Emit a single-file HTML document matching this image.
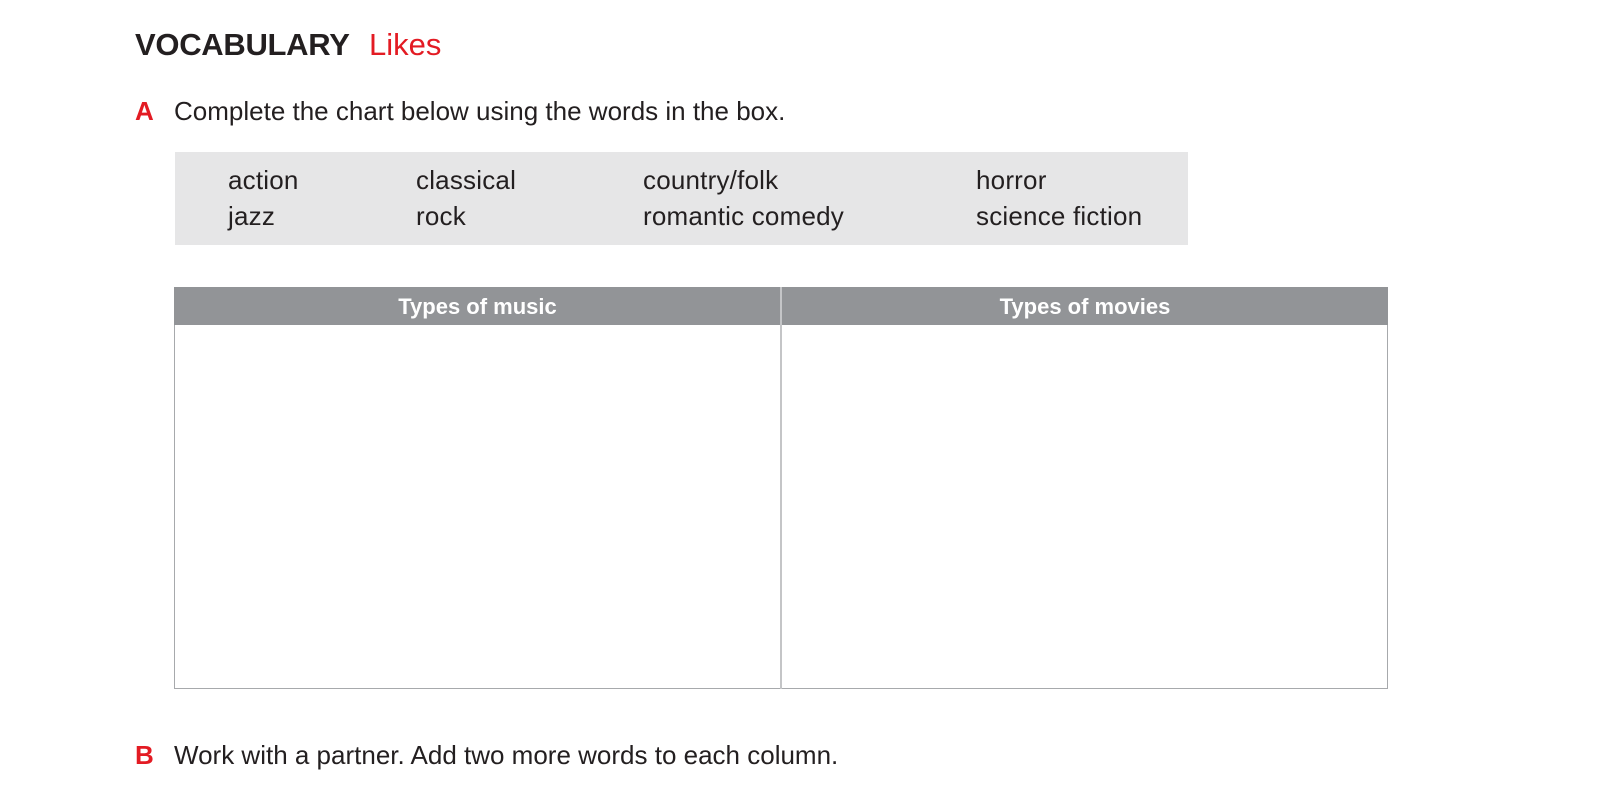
<!DOCTYPE html>
<html><head><style>
body{margin:0;width:1612px;height:795px;background:#fff;font-family:"Liberation Sans",Arial,sans-serif;position:relative;overflow:hidden;color:#231f20}
.a{position:absolute;white-space:nowrap}
.w{font-size:26px;letter-spacing:0.2px}
</style></head><body>
<div class="a" style="left:135px;top:27px;font-size:31px;font-weight:bold;letter-spacing:-0.3px">VOCABULARY</div>
<div class="a" style="left:369px;top:27px;font-size:31px;color:#e31b23">Likes</div>
<div class="a" style="left:135px;top:96px;font-size:26px;font-weight:bold;color:#e31b23">A</div>
<div class="a" style="left:174px;top:96px;font-size:26px">Complete the chart below using the words in the box.</div>
<div class="a" style="left:175px;top:152px;width:1013px;height:93px;background:#e6e6e7"></div>
<div class="a w" style="left:228px;top:165px">action</div>
<div class="a w" style="left:416px;top:165px">classical</div>
<div class="a w" style="left:643px;top:165px">country/folk</div>
<div class="a w" style="left:976px;top:165px">horror</div>
<div class="a w" style="left:228px;top:201px">jazz</div>
<div class="a w" style="left:416px;top:201px">rock</div>
<div class="a w" style="left:643px;top:201px">romantic comedy</div>
<div class="a w" style="left:976px;top:201px">science fiction</div>
<div class="a" style="left:174px;top:287px;width:1214px;height:38px;background:#929497"></div>
<div class="a" style="left:174px;top:287px;width:607px;height:38px;line-height:40px;text-align:center;color:#fff;font-weight:bold;font-size:22px">Types of music</div>
<div class="a" style="left:782px;top:287px;width:606px;height:38px;line-height:40px;text-align:center;color:#fff;font-weight:bold;font-size:22px">Types of movies</div>
<div class="a" style="left:174px;top:325px;width:1212px;height:363px;border:1px solid #a7a9ac;border-top:none"></div>
<div class="a" style="left:780px;top:287px;width:2px;height:402px;background:#c4c5c7"></div>
<div class="a" style="left:135px;top:740px;font-size:26px;font-weight:bold;color:#e31b23">B</div>
<div class="a" style="left:174px;top:740px;font-size:26px">Work with a partner. Add two more words to each column.</div>
</body></html>
